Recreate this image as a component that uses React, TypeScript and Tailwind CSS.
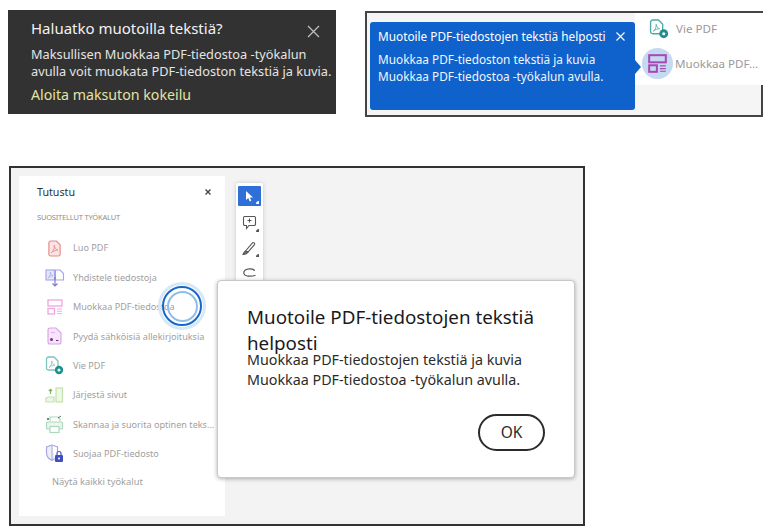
import React from 'react';

const sans = 'font-["Noto_Sans",sans-serif]';

// ── Työkaluikonit ──────────────────────────────────────────────
const LuoIcon = () => (
  <svg width="15" height="17" viewBox="0 0 16 18" fill="none" stroke="#e58a8a" strokeWidth="1.200">
    <path d="M2 3a2 2 0 0 1 2-2h6l4 4v10a2 2 0 0 1-2 2H4a2 2 0 0 1-2-2z" fill="#fbe3e3" />
    <path d="M4.500 13.500c2-1 3.500-4 3.200-8 .5 3 2 4.600 4 5.200-2.600 0-5 1-7.200 2.800z" strokeWidth="0.900" />
  </svg>
);
const YhdisteleIcon = () => (
  <svg width="20" height="20" viewBox="0 0 20 20" fill="none" stroke="#a3a3e6" strokeWidth="1.100">
    <rect x="1" y="2" width="8.500" height="10" fill="#e6e6fa" />
    <path d="M10.500 2H15l3.500 3.500V12h-8z" />
    <path d="M3 10c1.500-1 2.500-3 2.300-6 .4 2 1.300 3.300 2.700 3.800-1.800 0-3.500.8-5 2.200z" strokeWidth="0.700" />
    <path d="M10 9v9M7.500 15.500 10 18l2.500-2.500" stroke="#7a7ac0" />
  </svg>
);
const MuokkaaIcon = ({ color = '#eba6dd', size = 16, sw = 1.3 }: { color?: string; size?: number; sw?: number }) => (
  <svg width={size} height={size} viewBox="0 0 16 16" fill="none" stroke={color} strokeWidth={sw}>
    <rect x="1" y="1" width="14" height="6" />
    <rect x="1" y="9.500" width="6.500" height="5.500" />
    <path d="M10 10h5M10 12.300h5M10 14.600h5" strokeWidth="0.900" />
  </svg>
);
const PyydaIcon = () => (
  <svg width="15" height="18" viewBox="0 0 15 18" fill="none" stroke="#d7a3e6" strokeWidth="1.100">
    <path d="M1 3a2 2 0 0 1 2-2h6l5 5v9a2 2 0 0 1-2 2H3a2 2 0 0 1-2-2z" fill="#f6e4fa" />
    <circle cx="4.500" cy="12.500" r="1.500" fill="#7a2f8f" stroke="none" />
    <path d="M9 13.500h2.500" stroke="#7a2f8f" />
    <path d="M4 5.500h4" strokeWidth="0.800" />
  </svg>
);
const VieIcon = ({ size = 19, stroke = '#7fc0bc' }: { size?: number; stroke?: string }) => (
  <svg width={size} height={size} viewBox="0 0 19 19" fill="none">
    <path d="M1.500 3a2 2 0 0 1 2-2H9l4 4v9H3.500a2 2 0 0 1-2-2z" stroke={stroke} strokeWidth="1.300" />
    <path d="M4 11.500c1.800-1 3-3.200 2.800-6.500.4 2.300 1.500 3.700 3.200 4.300-2.200 0-4.200.7-6 2.200z" stroke={stroke} strokeWidth="0.800" />
    <circle cx="14" cy="14" r="4.200" fill="#1f8f8f" />
    <circle cx="14" cy="14" r="1.500" fill="#fff" />
  </svg>
);
const JarjestaIcon = () => (
  <svg width="19" height="16" viewBox="0 0 19 16" fill="none" stroke="#c4e2ad" strokeWidth="1.200">
    <rect x="11" y="1" width="6.500" height="14" fill="#eef7e6" />
    <path d="M1 15v-4l3-1h5V15z" fill="#eef7e6" />
    <path d="M5.500 7V2.500M3.800 4 5.500 2.300 7.200 4" stroke="#7fb85c" />
  </svg>
);
const SkannaaIcon = () => (
  <svg width="19" height="19" viewBox="0 0 19 19" fill="none" stroke="#aed8bc" strokeWidth="1.200">
    <path d="M5 6V2h8l2 2v2" />
    <rect x="1.500" y="7" width="16" height="7" rx="1" fill="#eaf6ee" />
    <rect x="5" y="11.500" width="9" height="6" fill="#fff" />
    <circle cx="3" cy="4" r="1" fill="#2c6b4a" stroke="none" />
    <path d="m13 3 3-2" stroke="#2c6b4a" strokeWidth="0.900" />
  </svg>
);
const SuojaaIcon = () => (
  <svg width="19" height="19" viewBox="0 0 19 19" fill="none">
    <path d="M7 1 1.500 3v6c0 3.500 2.500 6 5.500 7.500 1-.5 2-1.100 2.800-2" stroke="#a8a8e2" strokeWidth="1.200" fill="#eeeefb" />
    <path d="M7 1v15.500" stroke="#a8a8e2" strokeWidth="1" />
    <path d="M7 1 12.500 3v5" stroke="#a8a8e2" strokeWidth="1.200" />
    <rect x="10" y="11" width="8" height="7" rx="1" fill="#3f4fc0" />
    <path d="M12 11V9.500a2 2 0 0 1 4 0V11" stroke="#3f4fc0" strokeWidth="1.200" />
    <circle cx="14" cy="14.500" r="1" fill="#fff" />
  </svg>
);

// ── Työkalurivin ikonit ────────────────────────────────────────
const Corner = () => <span className="absolute right-0 bottom-0 w-[3px] h-[3px] bg-[#555] rounded-tl-[3px]" />;

const ToolBtn = ({ children }: { children: React.ReactNode }) => (
  <div className="relative w-[19px] h-[18px] flex items-center justify-center">
    {children}
    <Corner />
  </div>
);

const tools = [
  { name: 'Luo PDF', icon: <LuoIcon /> },
  { name: 'Yhdistele tiedostoja', icon: <YhdisteleIcon /> },
  { name: 'Muokkaa PDF-tiedostoa', icon: <MuokkaaIcon /> },
  { name: 'Pyydä sähköisiä allekirjoituksia', icon: <PyydaIcon /> },
  { name: 'Vie PDF', icon: <VieIcon /> },
  { name: 'Järjestä sivut', icon: <JarjestaIcon /> },
  { name: 'Skannaa ja suorita optinen teks...', icon: <SkannaaIcon /> },
  { name: 'Suojaa PDF-tiedosto', icon: <SuojaaIcon /> },
];

export default function App() {
  return (
    <div className={`${sans} w-[768px] h-[530px] overflow-hidden bg-white pt-[10px] pl-[8px]`}>

      {/* Ylärivi */}
      <div className="flex items-start gap-[29px] h-[107px]">
        <div className="w-[328px] h-[104px] bg-[#323232] pl-[23px] pt-[5px] pr-[2px]">
          <div className="flex items-start justify-between pr-[14px]">
            <p className="text-[15px] leading-[26px] text-[#f2f2f2]">Haluatko muotoilla tekstiä?</p>
            <svg className="mt-[10px]" width="13" height="13" viewBox="0 0 13 13" stroke="#bdbdbd" strokeWidth="1.300">
              <path d="m1 1 11 11M12 1 1 12" />
            </svg>
          </div>
          <p className="mt-[4.500px] text-[12.750px] leading-[17px] text-[#e4e4e4] whitespace-nowrap">
            Maksullisen Muokkaa PDF-tiedostoa -työkalun<br />
            avulla voit muokata PDF-tiedoston tekstiä ja kuvia.
          </p>
          <p className="mt-[5px] text-[14.200px] leading-[20px] text-[#e3e2a4]">Aloita maksuton kokeilu</p>
        </div>

        <div className="mt-px w-[398px] h-[106px] border-2 border-[#444] bg-[#f5f5f5] flex items-start">
          <div className="relative mt-[9px] ml-[3px] w-[265px] h-[88px] rounded-[3px] bg-[#0f62cc] pl-[8px] pt-[4px] text-white shrink-0">
            <div className="flex items-center justify-between pr-[10px]">
              <p className="text-[11.800px] leading-[20px] whitespace-nowrap">Muotoile PDF-tiedostojen tekstiä helposti</p>
              <svg width="9" height="9" viewBox="0 0 9 9" stroke="#fff" strokeWidth="1.100">
                <path d="m.5.500 8 8M8.500.500l-8 8" />
              </svg>
            </div>
            <p className="mt-[5px] text-[11.800px] leading-[17px] whitespace-nowrap text-[#f2f6fc]">
              Muokkaa PDF-tiedoston tekstiä ja kuvia<br />
              Muokkaa PDF-tiedostoa -työkalun avulla.
            </p>
            <span className="absolute right-[-6px] top-[38px] w-0 h-0 border-y-[7px] border-y-transparent border-l-[6px] border-l-[#0f62cc]" />
          </div>
          <div className="bg-white w-[128px] h-[72px] shrink-0 text-[#9a9a9a] text-[11.600px] whitespace-nowrap">
            <div className="flex items-center gap-[7px] pl-[14px] mt-[5px] h-[22px]">
              <VieIcon size={20} stroke="#4fa9a4" />
              <span>Vie PDF</span>
            </div>
            <div className="relative flex items-center pl-[40px] mt-[8px] h-[31px]">
              <div className="absolute left-[7px] top-0 w-[31px] h-[31px] rounded-full bg-[#c5d9f1] flex items-center justify-center">
                <MuokkaaIcon color="#a848b8" size={19} sw={1.7} />
              </div>
              <span>Muokkaa PDF...</span>
            </div>
          </div>
        </div>
      </div>

      {/* Alakehys */}
      <div className="relative mt-[49px] ml-px w-[576px] h-[360px] border-2 border-[#333] bg-[#f3f3f3] flex items-start pl-[8px] pt-[8px]">
        <div className="w-[206px] h-[340px] bg-white shrink-0 pl-[18px] pr-[12px] pt-[7px]">
          <div className="flex items-center justify-between pr-[2px]">
            <h2 className="text-[10.700px] leading-[18px] text-[#333]">Tutustu</h2>
            <svg width="6" height="6" viewBox="0 0 6 6" stroke="#444" strokeWidth="1.400">
              <path d="m.5.500 5 5M5.500.500l-5 5" />
            </svg>
          </div>
          <p className="mt-[10px] text-[7.500px] leading-[12px] tracking-[-0.2px] text-[#8c8c8c] uppercase">Suositellut työkalut</p>
          <ul className="mt-[10.500px]">
            {tools.map((t) => (
              <li key={t.name} className="flex items-center h-[29.400px] text-[9.100px] text-[#a0a0a0] whitespace-nowrap">
                <span className="w-[35px] mr-px flex justify-center shrink-0">{t.icon}</span>
                <span>{t.name}</span>
              </li>
            ))}
          </ul>
          <p className="mt-[5px] ml-[15px] text-[9.300px] leading-[16px] text-[#a0a0a0]">Näytä kaikki työkalut</p>
        </div>

        {/* Työkalurivi */}
        <div className="ml-[11px] mt-[7px] w-[27px] h-[110px] bg-white shadow-[0_0_4px_rgba(0,0,0,0.18)] rounded-[2px] flex flex-col items-center pt-[3px] gap-[7.500px] shrink-0">
          <div className="relative w-[23px] h-[20px] bg-[#2f6fd8] rounded-[1px] flex items-center justify-center">
            <svg width="9" height="11" viewBox="0 0 9 11" fill="#fff">
              <path d="M1 0v9l2.300-2 1.500 3.500 1.500-.7-1.500-3.300H8z" />
            </svg>
            <span className="absolute right-[2px] bottom-[2px] w-[3px] h-[3px] bg-white rounded-tl-[3px]" />
          </div>
          <ToolBtn>
            <svg width="15" height="15" viewBox="0 0 15 15" fill="none" stroke="#555" strokeWidth="1.100">
              <path d="M2.500 1.500h10a1.500 1.500 0 0 1 1 1.500v6a1.500 1.500 0 0 1-1 1.500H7L4.500 13.500v-3h-2a1.500 1.500 0 0 1-1-1.500V3a1.500 1.500 0 0 1 1-1.500z" />
              <path d="M7.500 3.500v4M5.500 5.500h4" />
            </svg>
          </ToolBtn>
          <ToolBtn>
            <svg width="15" height="15" viewBox="0 0 15 15" fill="none" stroke="#555" strokeWidth="1.100">
              <path d="M3.500 10 10.500 1.800c1-.8 2.700.6 2 1.800L6 11z" />
              <path d="M1 13.500c1-2.500 1.800-3.300 2.500-3.500L6 11c-.5 1-2.500 2.300-5 2.500z" fill="#777" />
            </svg>
          </ToolBtn>
          <ToolBtn>
            <svg width="16" height="13" viewBox="0 0 16 13" fill="none" stroke="#555" strokeWidth="1.200">
              <path d="M12.500 4C12 1.500 5.500 1 3 3.200.8 5.200 1.500 8.500 5 9c3 .4 6 .2 8.500-.8" />
            </svg>
          </ToolBtn>
        </div>

        {/* Korostusrengas */}
        <div className="absolute left-[147px] top-[114px] w-[48px] h-[48px] rounded-full border-[3px] border-[#d8e8f9] flex items-center justify-center">
          <div className="w-[40px] h-[40px] shrink-0 rounded-full border-[2.500px] border-[#1769c9] flex items-center justify-center">
            <div className="w-[31px] h-[31px] shrink-0 rounded-full border-[2px] border-[#8fbdea]" />
          </div>
        </div>

        {/* Valintaikkuna */}
        <div className="absolute left-[206px] top-[112px] w-[358px] h-[198px] bg-white rounded-[4px] border border-[#c8c8c8] shadow-[0_1px_4px_rgba(0,0,0,0.3)] pl-[29px] pr-[28px] pt-[23px] flex flex-col">
          <h1 className="text-[18.800px] leading-[26px] text-[#1a1a1a]">Muotoile PDF-tiedostojen tekstiä helposti</h1>
          <p className="mt-[-6px] text-[14.300px] leading-[20px] text-[#2b2b2b] whitespace-nowrap">
            Muokkaa PDF-tiedostojen tekstiä ja kuvia<br />
            Muokkaa PDF-tiedostoa -työkalun avulla.
          </p>
          <div className="flex justify-end mt-[24px] pr-[1px]">
            <button className="w-[67px] h-[37px] rounded-full border-2 border-[#2b2b2b] text-[15.500px] text-[#2b2b2b]">OK</button>
          </div>
        </div>
      </div>

    </div>
  );
}
